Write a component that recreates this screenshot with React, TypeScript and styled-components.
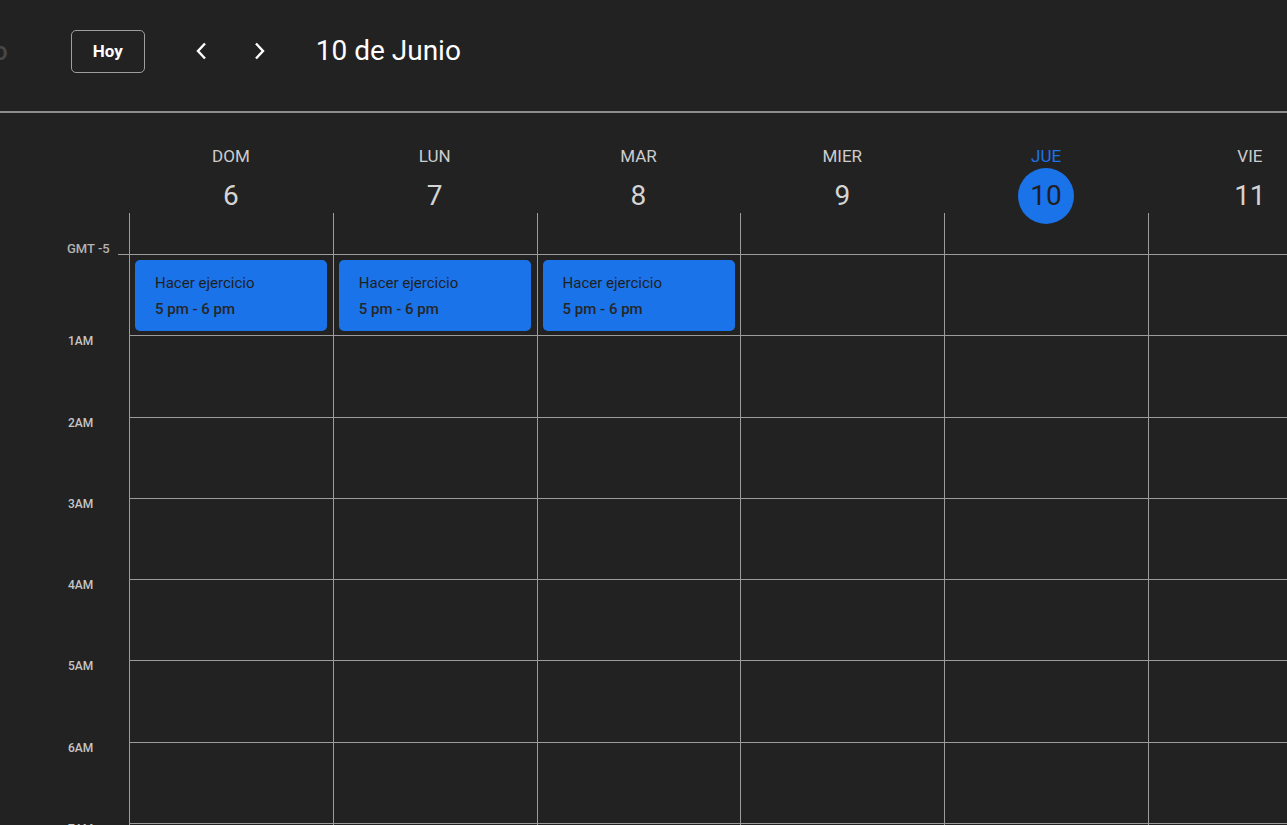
import React from "react";
import styled, { createGlobalStyle } from "styled-components";

const LINE = "#9c9c9c";
const BLUE = "#1a73e8";
const COL_W = 203.8;
const GUTTER = 129;
const ROW_H = 81.3;

const GlobalStyle = createGlobalStyle`
  html, body { margin: 0; padding: 0; background: #222222; }
  body { font-family: Roboto, "Noto Sans", Arial, sans-serif; color: #e8e8e8; overflow: hidden; }
  *, *::before, *::after { box-sizing: border-box; }
`;

const Page = styled.div`
  width: 1287px;
  height: 825px;
  overflow: hidden;
  display: flex;
  flex-direction: column;
  background: #222222;
`;

const TopBar = styled.header`
  height: 113px;
  flex: none;
  display: flex;
  align-items: center;
  padding-bottom: 9px;
  border-bottom: 2px solid #8e8e8e;
`;

const Brand = styled.span`
  font-size: 26px;
  line-height: 1;
  color: #474747;
  margin-left: -7px;
  font-weight: 500;
`;

const TodayButton = styled.button`
  margin-left: 63px;
  width: 74px;
  height: 43px;
  border: 1px solid #9e9e9e;
  border-radius: 5px;
  background: transparent;
  color: #ffffff;
  font-family: Roboto, Arial, sans-serif;
  font-weight: 700;
  font-size: 17px;
  padding: 0;
  display: flex;
  align-items: center;
  justify-content: center;
`;

const NavGroup = styled.div`
  margin-left: 37px;
  display: flex;
  gap: 17px;
`;

const NavButton = styled.button`
  width: 40px;
  height: 40px;
  border: none;
  background: transparent;
  color: #ffffff;
  padding: 0;
  display: flex;
  align-items: center;
  justify-content: center;
`;

const Title = styled.h1`
  margin: 0 0 0 37px;
  font-size: 28px;
  font-weight: 400;
  line-height: 1;
  color: #ffffff;
`;

const DayHeaderRow = styled.div`
  display: flex;
  flex: none;
  height: 141px;
`;

const HeaderGutter = styled.div`
  width: ${GUTTER}px;
  flex: none;
  display: flex;
  align-items: flex-end;
  padding-left: 67px;
`;

const TzLabel = styled.span`
  font-size: 13px;
  line-height: 13px;
  font-weight: 500;
  color: #b3b3b3;
  margin-bottom: -1px;
`;

const DayHead = styled.div`
  width: ${COL_W}px;
  flex: none;
  display: flex;
  flex-direction: column;
  align-items: center;
  padding-top: 33px;
  background: linear-gradient(${LINE}, ${LINE}) left bottom / 1px 41px no-repeat;
`;

const DayName = styled.div<{ $today?: boolean }>`
  font-size: 17px;
  line-height: 20px;
  color: ${(p) => (p.$today ? BLUE : "#cdcdcd")};
`;

const DayNum = styled.div<{ $today?: boolean }>`
  margin-top: 2px;
  width: 56px;
  height: 56px;
  border-radius: 50%;
  display: flex;
  align-items: center;
  justify-content: center;
  font-size: 28px;
  line-height: 1;
  background: ${(p) => (p.$today ? BLUE : "transparent")};
  color: ${(p) => (p.$today ? "#1f1f1f" : "#d4d4d4")};
`;

const Body = styled.div`
  display: flex;
  flex-direction: column;
`;

const HourRow = styled.div`
  display: flex;
  flex: none;
  height: ${ROW_H}px;
`;

const HourGutter = styled.div<{ $tick?: boolean }>`
  width: ${GUTTER}px;
  flex: none;
  padding-left: 68px;
  background: ${(p) =>
    p.$tick ? `linear-gradient(${LINE}, ${LINE}) right top / 11px 1px no-repeat` : "none"};
`;

const HourLabel = styled.span`
  display: block;
  font-size: 12px;
  line-height: 12px;
  font-weight: 500;
  color: #c6c6c6;
`;

const Cell = styled.div`
  width: ${COL_W}px;
  flex: none;
  border-top: 1px solid ${LINE};
  border-left: 1px solid ${LINE};
  padding: 5px 5.5px 0 5px;
`;

const EventCard = styled.div`
  background: ${BLUE};
  border-radius: 5px;
  height: 71px;
  padding: 10px 20px 0;
  color: #1f1f1f;
`;

const EventTitle = styled.div`
  font-size: 15px;
  line-height: 26px;
  font-weight: 400;
`;

const EventTime = styled.div`
  font-size: 15px;
  line-height: 26px;
  font-weight: 500;
  color: #262626;
`;

const Chevron = ({ dir }: { dir: "left" | "right" }) => (
  <svg width="24" height="24" viewBox="0 0 24 24" fill="none">
    <path
      d={dir === "left" ? "M15 4.5 L8 12 L15 19.5" : "M9 4.5 L16 12 L9 19.5"}
      stroke="currentColor"
      strokeWidth="2.4"
      strokeLinecap="butt"
      strokeLinejoin="miter"
    />
  </svg>
);

const days = [
  { name: "DOM", num: 6 },
  { name: "LUN", num: 7 },
  { name: "MAR", num: 8 },
  { name: "MIER", num: 9 },
  { name: "JUE", num: 10, today: true },
  { name: "VIE", num: 11 },
  { name: "SAB", num: 12 },
];

const hours = ["", "1AM", "2AM", "3AM", "4AM", "5AM", "6AM", "7AM", "8AM", "9AM"];

const eventDays = new Set([0, 1, 2]);

export default function App() {
  return (
    <>
      <GlobalStyle />
      <Page>
        <TopBar>
          <Brand>o</Brand>
          <TodayButton>Hoy</TodayButton>
          <NavGroup>
            <NavButton aria-label="Anterior">
              <Chevron dir="left" />
            </NavButton>
            <NavButton aria-label="Siguiente">
              <Chevron dir="right" />
            </NavButton>
          </NavGroup>
          <Title>10 de Junio</Title>
        </TopBar>
        <DayHeaderRow>
          <HeaderGutter>
            <TzLabel>GMT -5</TzLabel>
          </HeaderGutter>
          {days.map((d) => (
            <DayHead key={d.name}>
              <DayName $today={d.today}>{d.name}</DayName>
              <DayNum $today={d.today}>{d.num}</DayNum>
            </DayHead>
          ))}
        </DayHeaderRow>
        <Body>
          {hours.map((h, ri) => (
            <HourRow key={ri}>
              <HourGutter $tick={ri === 0}>{h && <HourLabel>{h}</HourLabel>}</HourGutter>
              {days.map((d, ci) => (
                <Cell key={d.name}>
                  {ri === 0 && eventDays.has(ci) && (
                    <EventCard>
                      <EventTitle>Hacer ejercicio</EventTitle>
                      <EventTime>5 pm - 6 pm</EventTime>
                    </EventCard>
                  )}
                </Cell>
              ))}
            </HourRow>
          ))}
        </Body>
      </Page>
    </>
  );
}
